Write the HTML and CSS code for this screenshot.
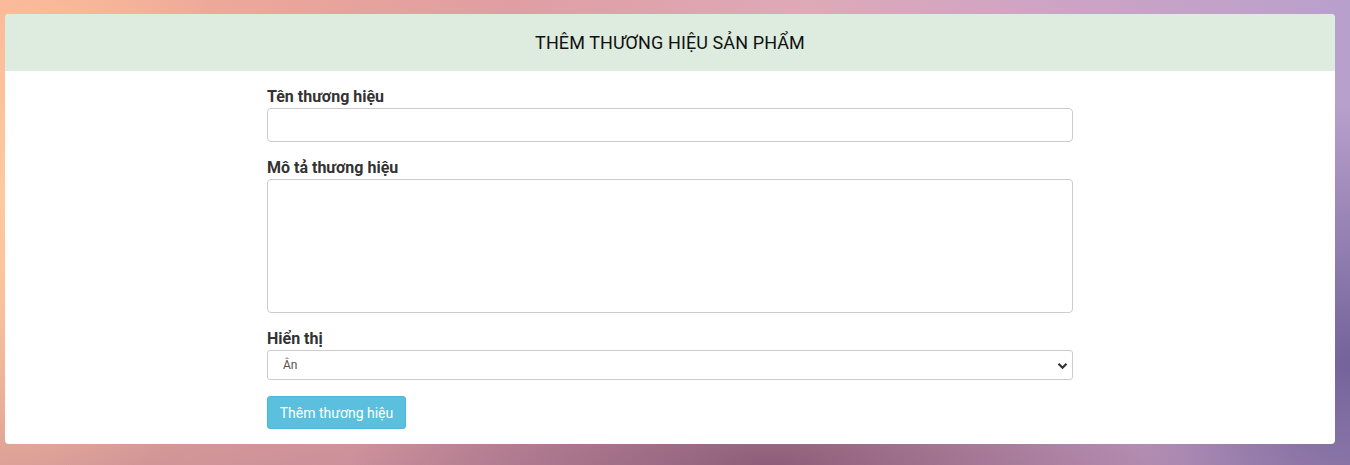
FILE: index.html
```html
<!DOCTYPE html>
<html lang="vi">
<head>
<meta charset="utf-8">
<title>Thêm thương hiệu sản phẩm</title>
<link rel="stylesheet" href="styles.css">
</head>
<body>
<div class="page">
  <section class="card">
    <header class="card-head">THÊM THƯƠNG HIỆU SẢN PHẨM</header>
    <div class="card-body">
      <form class="form">
        <div class="group">
          <label class="label">Tên thương hiệu</label>
          <input class="control input" type="text">
        </div>
        <div class="group">
          <label class="label">Mô tả thương hiệu</label>
          <textarea class="control textarea"></textarea>
        </div>
        <div class="group">
          <label class="label">Hiển thị</label>
          <div class="select-wrap">
            <div class="control select">Ân</div>
            <svg class="chev" width="11" height="8" viewBox="0 0 11 8"><path d="M1.5 1.8 L5.5 5.8 L9.5 1.8" fill="none" stroke="#333" stroke-width="2.2"/></svg>
          </div>
        </div>
        <button type="button" class="btn">Thêm thương hiệu</button>
      </form>
    </div>
  </section>
</div>
</body>
</html>
```
FILE: styles.css
```css
html, body {
  margin: 0;
  height: 100%;
}
body {
  font-family: Roboto, "Liberation Sans", sans-serif;
  background:
    radial-gradient(ellipse 260px 320px at 0% 42%, rgba(255, 204, 160, 0.9), rgba(255, 204, 160, 0) 100%),
    radial-gradient(ellipse 220px 260px at 100% 78%, rgba(112, 96, 152, 0.95), rgba(112, 96, 152, 0) 100%),
    radial-gradient(ellipse 420px 120px at 57% 100%, rgba(138, 90, 118, 0.95), rgba(138, 90, 118, 0) 100%),
    linear-gradient(to bottom, rgba(0,0,0,0) 60%, rgba(150, 110, 150, 0.35) 100%),
    linear-gradient(to right, #f9b195 0%, #e8a39c 25%, #e09ea3 38%, #dea9b8 60%, #cca3c6 80%, #b8a0cc 100%);
  overflow: hidden;
}
.page {
  padding: 14px 15px 21px 5px;
}
.card {
  background: #fff;
  border-radius: 4px;
  overflow: hidden;
}
.card-head {
  background: #ddecdf;
  height: 57px;
  line-height: 57px;
  text-align: center;
  font-size: 18px;
  color: #111;
  letter-spacing: 0.1px;
}
.card-body {
  padding: 16px 0 15px;
}
.form {
  width: 806px;
  margin: 0 auto;
}
.group {
  margin-bottom: 16px;
}
.label {
  display: block;
  font-size: 16px;
  font-weight: 700;
  line-height: 20px;
  color: #333;
  margin-bottom: 1px;
}
.control {
  display: block;
  box-sizing: border-box;
  width: 100%;
  border: 1px solid #ccc;
  border-radius: 4px;
  background: #fff;
  font-family: inherit;
  margin: 0;
}
.input {
  height: 34px;
}
.textarea {
  height: 134px;
  resize: none;
}
.select-wrap {
  position: relative;
}
.select {
  height: 30px;
  line-height: 28px;
  font-size: 12px;
  color: #5a5148;
  padding-left: 15px;
  border-radius: 3px;
}
.chev {
  position: absolute;
  right: 5px;
  top: 12px;
}
.btn {
  display: block;
  height: 33px;
  width: 139px;
  padding: 0;
  border: 1px solid #46b8da;
  border-radius: 3px;
  background: #5bc0de;
  color: #fff;
  font-family: inherit;
  font-size: 14px;
}
```
